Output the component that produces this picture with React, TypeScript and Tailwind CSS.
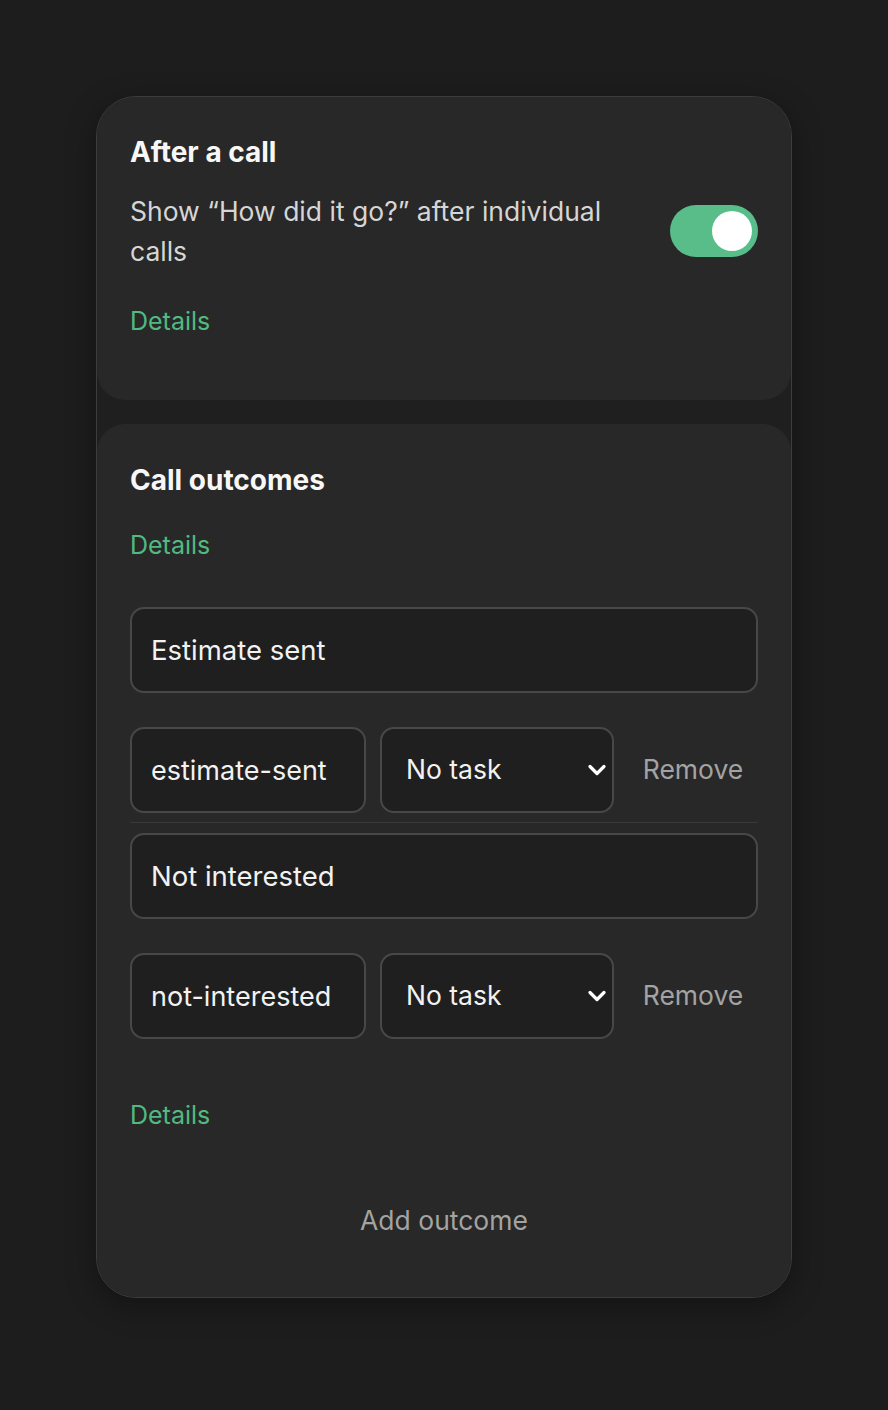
import React, { useState } from "react";
import { ChevronDown } from "lucide-react";

interface Outcome {
  id: string;
  label: string;
  slug: string;
  task: string;
}

const Toggle = ({ on, onChange }: { on: boolean; onChange: (v: boolean) => void }) => (
  <button
    onClick={() => onChange(!on)}
    className={`flex h-[52px] w-[88px] shrink-0 items-center rounded-full px-[6px] ${
      on ? "justify-end bg-[#58bd89]" : "justify-start bg-[#4a4a4a]"
    }`}
  >
    <span className="h-[40px] w-[40px] rounded-full bg-white" />
  </button>
);

const OutcomeItem = ({
  outcome,
  last,
  onRemove,
}: {
  outcome: Outcome;
  last: boolean;
  onRemove: () => void;
}) => (
  <div className={last ? "pt-[10px]" : "border-b border-[#3a3a3a] pb-[9px]"}>
    <input
      defaultValue={outcome.label}
      className="h-[86px] w-full rounded-[14px] border-2 border-[#484848] bg-[#1f1f1f] px-[19px] text-[27.5px] text-[#f2f2f2] outline-none"
    />
    <div className="mt-[34px] flex items-center gap-[14px]">
      <input
        defaultValue={outcome.slug}
        className="h-[86px] w-[236px] rounded-[14px] border-2 border-[#484848] bg-[#1f1f1f] px-[19px] text-[27px] text-[#f2f2f2] outline-none"
      />
      <div className="relative w-[234px]">
        <select
          defaultValue={outcome.task}
          className="h-[86px] w-full appearance-none rounded-[14px] border-2 border-[#484848] bg-[#1f1f1f] pl-[24px] text-[26.5px] text-[#f2f2f2] outline-none"
        >
          <option value="none">No task</option>
          <option value="follow">Follow up</option>
        </select>
        {/* 셀렉트 화살표 */}
        <ChevronDown
          className="pointer-events-none absolute right-[3px] top-1/2 -translate-y-1/2 text-white"
          size={28}
          strokeWidth={2.8}
        />
      </div>
      <button onClick={onRemove} className="flex-1 text-center text-[26.5px] text-[#a3a3a3]">
        Remove
      </button>
    </div>
  </div>
);

export default function App() {
  const [showAfterCall, setShowAfterCall] = useState(true);
  const [outcomes, setOutcomes] = useState<Outcome[]>([
    { id: "1", label: "Estimate sent", slug: "estimate-sent", task: "none" },
    { id: "2", label: "Not interested", slug: "not-interested", task: "none" },
  ]);

  return (
    <div className="min-h-[1410px] bg-[#1d1d1d] pt-[96px] font-[family-name:Inter,sans-serif]">
      <div className="mx-auto w-[696px] overflow-hidden rounded-[40px] border border-[#3c3c3c] bg-[#1f1f1f] shadow-[0_8px_30px_rgba(0,0,0,0.35)]">
        {/* 통화 후 */}
        <section className="rounded-b-[28px] bg-[#282828] px-[33px] pb-[63px] pt-[37px]">
          <h2 className="text-[28px] font-bold leading-[36px] text-[#f7f7f7]">After a call</h2>
          <div className="mt-[21px] flex items-center gap-[32px]">
            <p className="flex-1 text-[26.5px] leading-[40px] text-[#d6d6d6]">
              Show “How did it go?” after individual calls
            </p>
            <Toggle on={showAfterCall} onChange={setShowAfterCall} />
          </div>
          <a className="mt-[34px] block text-[25px] leading-[32px] text-[#50ba81]">Details</a>
        </section>

        {/* 통화 결과 */}
        <section className="mt-[24px] rounded-t-[28px] bg-[#282828] px-[33px] pb-[61px] pt-[38px]">
          <h2 className="text-[28px] font-bold leading-[36px] text-[#f7f7f7]">Call outcomes</h2>
          <a className="mt-[31px] block text-[25px] leading-[32px] text-[#50ba81]">Details</a>
          <div className="mt-[46px]">
            {outcomes.map((o, i) => (
              <OutcomeItem
                key={o.id}
                outcome={o}
                last={i === outcomes.length - 1}
                onRemove={() => setOutcomes((prev) => prev.filter((p) => p.id !== o.id))}
              />
            ))}
          </div>
          <a className="mt-[60px] block text-[25px] leading-[32px] text-[#50ba81]">Details</a>
          <button
            onClick={() =>
              setOutcomes((prev) => [
                ...prev,
                { id: Date.now().toString(), label: "", slug: "", task: "none" },
              ])
            }
            className="mx-auto mt-[73px] block text-[26.5px] leading-[32px] text-[#a3a3a3]"
          >
            Add outcome
          </button>
        </section>
      </div>
    </div>
  );
}
